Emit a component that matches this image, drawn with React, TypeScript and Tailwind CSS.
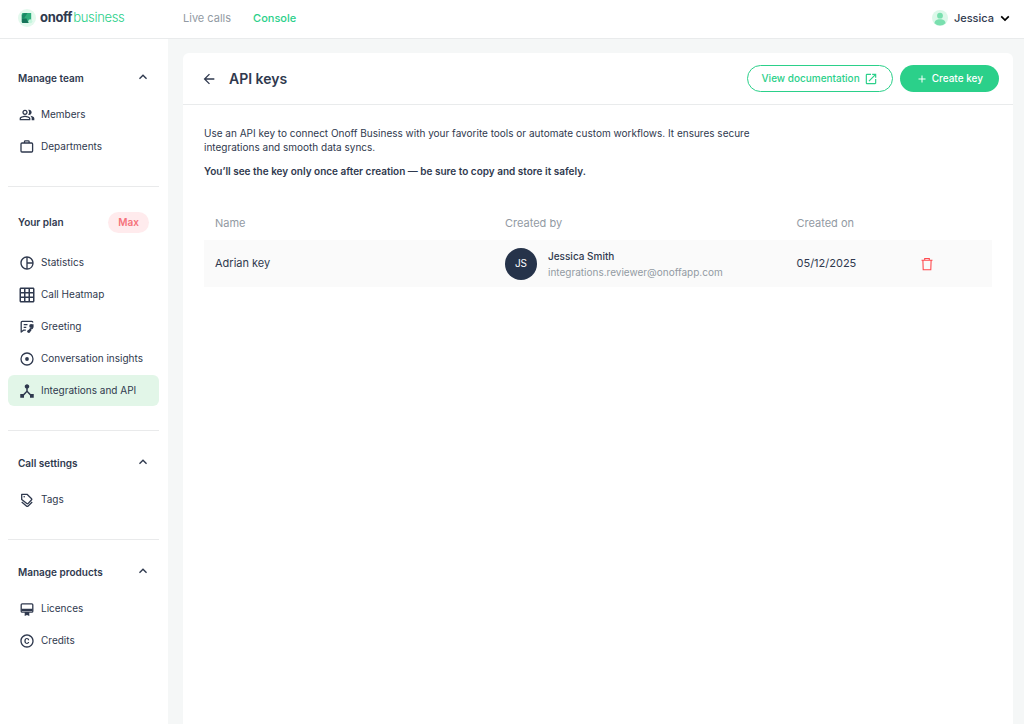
import type { ReactNode } from "react";
import {
  MdAdd,
  MdArrowBack,
  MdCopyright,
  MdDeviceHub,
  MdGridOn,
  MdOpenInNew,
  MdOutlinePeopleAlt,
  MdPieChartOutline,
  MdKeyboardArrowUp,
} from "react-icons/md";

function Logo() {
  return (
    <svg viewBox="0 0 18 18" className="size-[18px]" aria-hidden="true">
      <circle cx="9" cy="9" r="9" fill="#e3f9ed" />
      <path d="M3.800 5.200Q3.800 4 5 4H13.200V10.800L10.400 14H5Q3.800 14 3.800 12.800Z" fill="#2fae7c" />
      <path d="M3.800 9.500H8.500L10.400 14H5Q3.800 14 3.800 12.800Z" fill="#17745a" />
      <path d="M6 4H9.500L6 9.500H3.800V6.500Z" fill="#1b8a66" />
      <circle cx="12.300" cy="12.300" r="2" fill="#c4f5dc" />
    </svg>
  );
}

function Avatar() {
  return (
    <svg viewBox="0 0 16 16" className="size-4" aria-hidden="true">
      <circle cx="8" cy="8" r="8" fill="#dcf8e9" />
      <circle cx="8" cy="5.700" r="2.900" fill="#79dfae" />
      <path d="M2.500 13.200C2.500 10.600 5 9.300 8 9.300s5.500 1.300 5.500 3.900A8 8 0 0 1 8 15.500a8 8 0 0 1-5.500-2.300Z" fill="#79dfae" />
    </svg>
  );
}

function Line({ children }: { children: ReactNode }) {
  return (
    <svg
      viewBox="0 0 16 16"
      className="size-4"
      fill="none"
      stroke="currentColor"
      strokeWidth="1.3"
      strokeLinejoin="round"
      aria-hidden="true"
    >
      {children}
    </svg>
  );
}

const briefcase = (
  <Line>
    <rect x="2" y="4" width="11.600" height="9" rx="1" />
    <path d="M5.500 4V2.600q0-.8.8-.8h3q.8 0 .8.800V4" />
  </Line>
);

const greeting = (
  <Line>
    <path d="M6.800 11.200H4.500L2.200 13V3.400q0-1 1-1h9.600q1 0 1 1" />
    <path d="M4.700 5.600h3.800M4.700 8.400h2.600" />
    <path d="M9.800 12.200L11.600 9.400" />
    <circle cx="12.200" cy="7" r="2" fill="currentColor" stroke="none" />
    <path d="M13.900 5.200v3q-.3 1.800-2.300 1.800v2" />
    <circle cx="9.800" cy="12.300" r="1.600" fill="currentColor" stroke="none" />
  </Line>
);

const insights = (
  <Line>
    <circle cx="8" cy="8" r="6" />
    <circle cx="8" cy="8" r="1.900" fill="currentColor" stroke="none" />
  </Line>
);

const tags = (
  <Line>
    <path d="M2.700 2.300H8l4.600 4.400q.5.500 0 1L9 11.600q-.6.500-1.200 0L2.700 7.500Z" />
    <path d="M2.700 9.900l5 4.300q.6.500 1.200 0L13.200 10" />
    <circle cx="5.200" cy="4.800" r=".8" fill="currentColor" stroke="none" />
  </Line>
);

const licence = (
  <Line>
    <rect x="2.200" y="2.800" width="11.600" height="8.400" rx="1" />
    <path d="M2.400 8.900h11.200" strokeWidth="2.300" />
    <path d="M5.700 11h4.600v4L8 14l-2.300 1Z" fill="currentColor" stroke="none" />
  </Line>
);

type Item = { label: string; icon: ReactNode; active?: boolean };

function NavList({ items }: { items: Item[] }) {
  return (
    <ul className="flex flex-col gap-px">
      {items.map((item) => (
        <li key={item.label}>
          <a
            href="#"
            aria-current={item.active ? "page" : undefined}
            className={
              "flex h-[31px] items-center gap-1.5 rounded-md pl-[11px] text-[10px] whitespace-nowrap " +
              (item.active ? "bg-[#e2f6e8]" : "")
            }
          >
            {item.icon}
            {item.label}
          </a>
        </li>
      ))}
    </ul>
  );
}

function Section({ title, badge, items }: { title: string; badge?: string; items: Item[] }) {
  return (
    <section className="border-b border-[#e9eaeb] pb-6 last:border-b-0">
      <h2 className="mb-[9px] flex items-center justify-between px-2.5 text-[10px] font-semibold">
        {badge ? (
          <>
            <span className="flex h-[31px] items-center">{title}</span>
            <span className="flex h-[21px] items-center rounded-full bg-[#ffebed] px-2.5 text-[#f5737b]">{badge}</span>
          </>
        ) : (
          <button type="button" aria-expanded="true" className="flex h-6 flex-1 items-center justify-between">
            {title}
            <MdKeyboardArrowUp className="-mr-0.5 mb-0.5 size-4" />
          </button>
        )}
      </h2>
      <NavList items={items} />
    </section>
  );
}

const team: Item[] = [
  { label: "Members", icon: <MdOutlinePeopleAlt className="size-4" /> },
  { label: "Departments", icon: briefcase },
];

const plan: Item[] = [
  { label: "Statistics", icon: <MdPieChartOutline className="size-4" /> },
  { label: "Call Heatmap", icon: <MdGridOn className="-mx-px size-[18px]" /> },
  { label: "Greeting", icon: greeting },
  { label: "Conversation insights", icon: insights },
  { label: "Integrations and API", icon: <MdDeviceHub className="-mx-px size-[18px]" />, active: true },
];

export default function App() {
  return (
    <div className="flex min-h-screen flex-col bg-[#f5f7f7] font-['Inter',sans-serif] text-[#2f394e]">
      <header className="flex h-[39px] items-center border-b border-[#e9ebec] bg-white pr-3 pb-0.5 pl-[18px]">
        <a href="#" className="flex w-[165px] items-center gap-1">
          <Logo />
          <span className="flex gap-px text-[13px] tracking-tight">
            <span className="font-bold">onoff</span>
            <span className="font-light text-[#2bd08a]">business</span>
          </span>
        </a>
        <nav className="flex gap-[22px] text-[11px]">
          <a href="#" className="text-[#929aa3]">Live calls</a>
          <a href="#" className="font-medium text-[#2bd08a]">Console</a>
        </nav>
        <button type="button" className="ml-auto flex items-center gap-1.5 text-[11px] font-medium">
          <Avatar />
          <span className="flex items-center gap-1">
            Jessica
            <svg
              viewBox="0 0 14 14"
              className="size-3.5 text-black"
              fill="none"
              stroke="currentColor"
              strokeWidth="1.7"
              aria-hidden="true"
            >
              <path d="M3.200 5.300L7 9l3.800-3.700" />
            </svg>
          </span>
        </button>
      </header>

      <div className="flex flex-1">
        <aside className="flex w-[168px] shrink-0 flex-col gap-5 bg-white pt-[27px] pr-[9px] pl-2">
          <Section title="Manage team" items={team} />
          <Section title="Your plan" badge="Max" items={plan} />
          <Section title="Call settings" items={[{ label: "Tags", icon: tags }]} />
          <Section
            title="Manage products"
            items={[
              { label: "Licences", icon: licence },
              { label: "Credits", icon: <MdCopyright className="size-4" /> },
            ]}
          />
        </aside>

        <main className="mt-3.5 mr-[11px] ml-[15px] min-w-0 flex-1 rounded-t-md bg-white">
          <div className="flex h-[52px] items-center border-b border-[#e9ebec] pr-3.5 pl-[18px]">
            <button type="button" aria-label="Back" className="mr-3">
              <MdArrowBack className="size-4" />
            </button>
            <h1 className="text-[14px] font-semibold">API keys</h1>
            <div className="ml-auto flex gap-[7px] text-[10px] font-medium">
              <a
                href="#"
                className="flex h-[27px] items-center gap-1 rounded-full border border-[#2bd08a] px-3.5 text-[#2bd08a]"
              >
                View documentation
                <MdOpenInNew className="size-3.5" />
              </a>
              <button type="button" className="flex h-[27px] items-center gap-1 rounded-full bg-[#2bd08a] px-4 text-white">
                <MdAdd className="size-3" />
                Create key
              </button>
            </div>
          </div>

          <div className="px-[21px] pt-[21px]">
            <p className="max-w-[560px] text-[10px] leading-[14px]">
              Use an API key to connect Onoff Business with your favorite tools or automate custom workflows. It ensures
              secure integrations and smooth data syncs.
            </p>
            <p className="mt-2.5 text-[10px] leading-[14px] font-semibold">
              You’ll see the key only once after creation — be sure to copy and store it safely.
            </p>

            <table className="mt-7 w-full table-fixed text-left text-[11px]">
              <colgroup>
                <col className="w-[36.8%]" />
                <col className="w-[37%]" />
                <col className="w-[16%]" />
                <col className="w-[10.2%]" />
              </colgroup>
              <thead>
                <tr className="h-[34px] text-[#929aa3]">
                  <th className="px-[11px] font-normal">Name</th>
                  <th className="px-[11px] font-normal">Created by</th>
                  <th className="px-[11px] font-normal">Created on</th>
                  <th aria-label="Actions" />
                </tr>
              </thead>
              <tbody>
                <tr className="h-[47px] bg-[#fafafa]">
                  <td className="px-[11px]">Adrian key</td>
                  <td className="px-[11px]">
                    <div className="flex items-center gap-[11px]">
                      <span className="flex size-8 shrink-0 items-center justify-center rounded-full bg-[#26334a] text-[10px] text-white">
                        JS
                      </span>
                      <div className="text-[10px] leading-4">
                        <div className="font-medium">Jessica Smith</div>
                        <div className="text-[#929aa3]">integrations.reviewer@onoffapp.com</div>
                      </div>
                    </div>
                  </td>
                  <td className="px-[11px]">05/12/2025</td>
                  <td className="px-2">
                    <button type="button" aria-label="Delete Adrian key" className="block text-[#ff4a4f]">
                      <svg viewBox="0 0 14 14" className="size-3.5" fill="none" stroke="currentColor" strokeWidth="1.1">
                        <path d="M1.500 3.300h11M4.700 3.200V1.500h4.600v1.700M2.900 3.500l.3 9.200h7.600l.3-9.200" />
                      </svg>
                    </button>
                  </td>
                </tr>
              </tbody>
            </table>
          </div>
        </main>
      </div>
    </div>
  );
}
